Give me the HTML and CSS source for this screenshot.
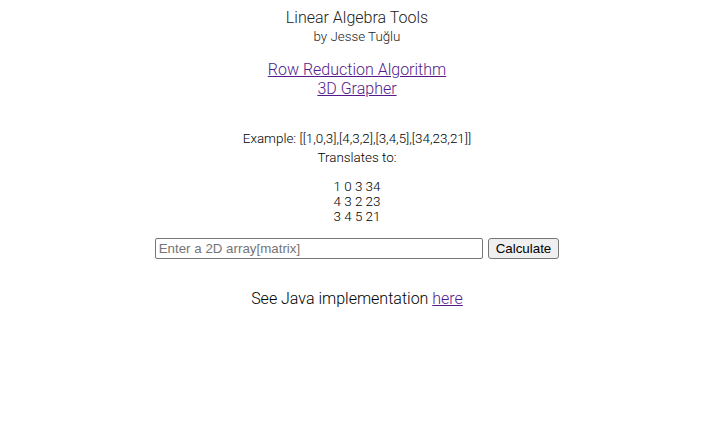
FILE: index.html
```html
<!DOCTYPE html>
<html>
<head>
<meta charset="utf-8">
<link rel="stylesheet" href="styles.css">
</head>
<body>
<div class="page">
  <header class="header">
    <h1 class="title">Linear Algebra Tools</h1>
    <p class="byline">by Jesse Tuğlu</p>
  </header>
  <nav class="links">
    <a class="link" href="#row">Row Reduction Algorithm</a>
    <a class="link" href="#grapher">3D Grapher</a>
  </nav>
  <section class="example">
    <p class="ex-line">Example: [[1,0,3],[4,3,2],[3,4,5],[34,23,21]]</p>
    <p class="ex-line">Translates to:</p>
    <div class="matrix">
      <div>1 0 3 34</div>
      <div>4 3 2 23</div>
      <div>3 4 5 21</div>
    </div>
  </section>
  <form class="calc">
    <input class="matrix-input" type="text" placeholder="Enter a 2D array[matrix]">
    <button class="calc-btn" type="button">Calculate</button>
  </form>
  <p class="java">See Java implementation <a class="link" href="#java">here</a></p>
</div>
</body>
</html>
```

FILE: styles.css
```css
html, body {
  margin: 0;
  padding: 0;
  background: #fff;
}
.page {
  font-family: Roboto, "Noto Sans", sans-serif;
  font-weight: 300;
  color: #000;
  text-align: center;
  display: flex;
  flex-direction: column;
  align-items: center;
  padding-top: 8px;
  padding-left: 11px;
}
.header {
  display: flex;
  flex-direction: column;
  align-items: center;
}
.title {
  margin: 0;
  font-size: 16px;
  font-weight: 300;
  line-height: 19px;
  color: #222;
}
.byline {
  margin: 1px 0 0;
  font-size: 13.33px;
  font-weight: 300;
  line-height: 17px;
  color: #222;
}
.links {
  display: flex;
  flex-direction: column;
  align-items: center;
  margin-top: 15px;
}
.link {
  color: #551a8b;
  font-size: 16px;
  line-height: 19px;
  text-decoration: underline;
}
.example {
  margin-top: 31px;
  display: flex;
  flex-direction: column;
  align-items: center;
}
.ex-line {
  margin: 0;
  font-size: 13.4px;
  line-height: 19px;
}
.matrix {
  margin-top: 12px;
  font-size: 13.4px;
  line-height: 15px;
}
.calc {
  margin-top: 14px;
  display: flex;
  align-items: center;
  gap: 5px;
}
.matrix-input {
  width: 328px;
  height: 21px;
  box-sizing: border-box;
  font-family: "Liberation Sans", Arial, sans-serif;
  font-size: 13.33px;
  border: 1px solid #767676;
  border-radius: 2px;
  padding: 1px 3px;
  margin: 0;
}
.calc-btn {
  height: 21px;
  box-sizing: border-box;
  font-family: "Liberation Sans", Arial, sans-serif;
  font-size: 13.33px;
  border: 1px solid #767676;
  border-radius: 3px;
  background: #efefef;
  padding: 1px 7px;
  margin: 0;
  color: #000;
}
.java {
  margin: 30px 0 0;
  font-size: 16px;
  line-height: 19px;
}
```
